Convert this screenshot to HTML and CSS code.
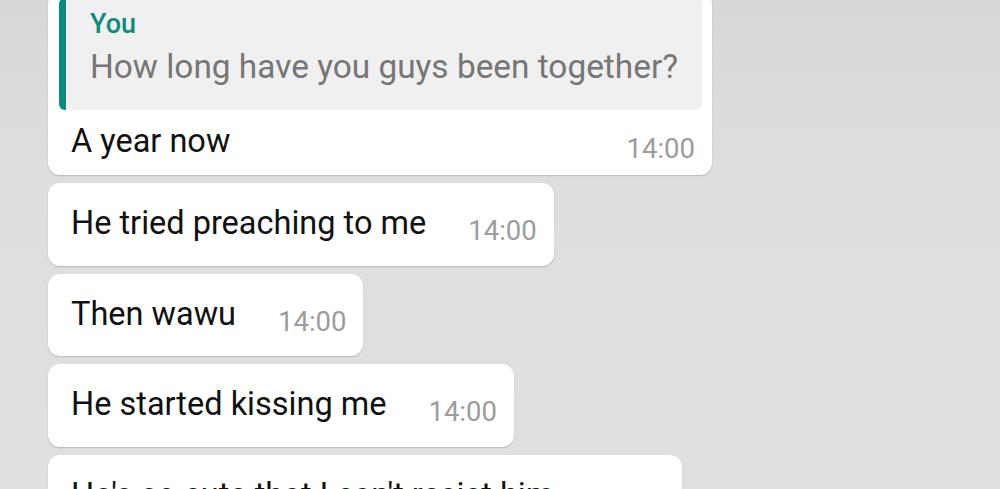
FILE: index.html
```html
<!DOCTYPE html>
<html lang="en">
<head>
<meta charset="utf-8">
<title>Chat</title>
<link rel="stylesheet" href="styles.css">
</head>
<body>
<div class="chat">
  <div class="bubble bubble-reply">
    <div class="quote">
      <div class="quote-author">You</div>
      <div class="quote-text">How long have you guys been together?</div>
    </div>
    <div class="row row-spread">
      <span class="msg">A year now</span>
      <span class="time">14:00</span>
    </div>
  </div>
  <div class="bubble">
    <div class="row">
      <span class="msg">He tried preaching to me</span>
      <span class="time">14:00</span>
    </div>
  </div>
  <div class="bubble">
    <div class="row">
      <span class="msg">Then wawu</span>
      <span class="time">14:00</span>
    </div>
  </div>
  <div class="bubble">
    <div class="row">
      <span class="msg">He started kissing me</span>
      <span class="time">14:00</span>
    </div>
  </div>
  <div class="bubble">
    <div class="row">
      <span class="msg">He's so cute that I can't resist him</span>
      <span class="time">14:00</span>
    </div>
  </div>
</div>
</body>
</html>
```

FILE: styles.css
```css
html, body {
  margin: 0;
  padding: 0;
  height: 100%;
  overflow: hidden;
}
body {
  background: linear-gradient(180deg, #d8d8d8 0%, #dedede 35%, #e0e0e0 100%);
  font-family: Roboto, "Noto Sans", sans-serif;
}
.chat {
  display: flex;
  flex-direction: column;
  align-items: flex-start;
  gap: 8px;
  padding-left: 48px;
  margin-top: -8px;
}
.bubble {
  background: #ffffff;
  border-radius: 12px;
  box-shadow: 0 1px 1.5px rgba(0, 0, 0, 0.18);
  padding: 21px 17px 18.7px 23px;
}
.bubble-reply {
  padding: 6px 10px 10px 11px;
  width: 643px;
}
.quote {
  background: #f0f0f0;
  border-left: 7px solid #0c8a7b;
  border-radius: 6px;
  padding: 10px 12px 24px 24px;
}
.quote-author {
  color: #0f8a7c;
  font-size: 27px;
  font-weight: 500;
  line-height: 32px;
}
.quote-text {
  color: #767676;
  font-size: 33.4px;
  line-height: 38px;
  margin-top: 8px;
  white-space: nowrap;
}
.row {
  display: flex;
  align-items: flex-start;
  gap: 42px;
}
.row-spread {
  justify-content: space-between;
  margin-top: 12px;
  padding-left: 12px;
  padding-right: 7px;
}
.msg {
  color: #111111;
  font-size: 32.5px;
  line-height: 38px;
  white-space: nowrap;
}
.time {
  color: #9c9c9c;
  font-size: 27.5px;
  line-height: 32px;
  margin-top: 11px;
}
```
